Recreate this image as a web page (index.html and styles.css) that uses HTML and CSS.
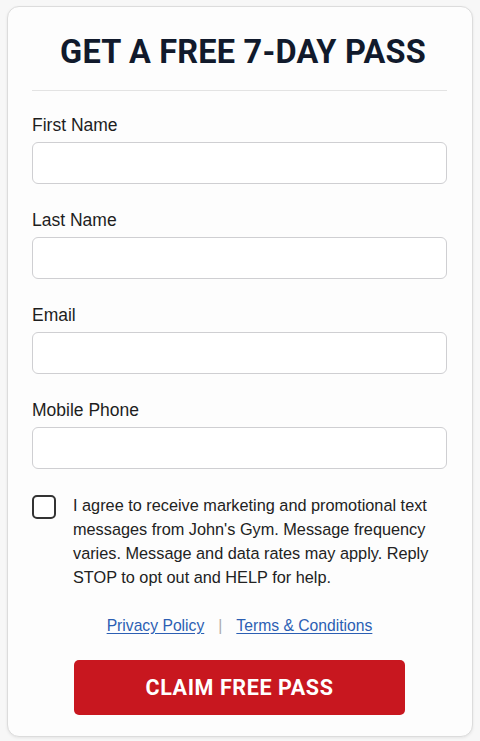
FILE: index.html
```html
<!DOCTYPE html>
<html lang="en">
<head>
<meta charset="utf-8">
<title>Get a Free 7-Day Pass</title>
<link rel="stylesheet" href="styles.css">
</head>
<body>
<main class="card">
  <h1 class="title">GET A FREE 7-DAY PASS</h1>
  <hr class="divider">
  <form class="form">
    <div class="field">
      <label class="label" for="first">First Name</label>
      <input class="input" id="first" type="text">
    </div>
    <div class="field">
      <label class="label" for="last">Last Name</label>
      <input class="input" id="last" type="text">
    </div>
    <div class="field">
      <label class="label" for="email">Email</label>
      <input class="input" id="email" type="email">
    </div>
    <div class="field">
      <label class="label" for="phone">Mobile Phone</label>
      <input class="input" id="phone" type="tel">
    </div>
    <label class="consent">
      <span class="checkbox"></span>
      <span class="consent-text">I agree to receive marketing and promotional text messages from John's Gym. Message frequency varies. Message and data rates may apply. Reply STOP to opt out and HELP for help.</span>
    </label>
    <nav class="links">
      <a href="#" class="link">Privacy Policy</a>
      <span class="sep">|</span>
      <a href="#" class="link">Terms &amp; Conditions</a>
    </nav>
    <button type="button" class="submit">CLAIM FREE PASS</button>
  </form>
</main>
</body>
</html>
```
FILE: styles.css
```css
* { box-sizing: border-box; }
html, body { margin: 0; padding: 0; }
body {
  background: #f7f7f7;
  padding: 6px 7px 4px;
  font-family: "Liberation Sans", Arial, sans-serif;
  color: #222;
}
.card {
  background: #fdfdfd;
  border: 1px solid #dcdcdc;
  border-radius: 12px;
  box-shadow: 0 1px 3px rgba(0,0,0,0.08);
  padding: 25px 25px 22px 24px;
  height: 731px;
}
.title {
  margin: 0;
  padding-left: 7px;
  text-align: center;
  font-family: Roboto, "Liberation Sans", sans-serif;
  font-weight: 700;
  font-size: 32.5px;
  line-height: 40px;
  color: #111a2c;
  letter-spacing: 0.2px;
}
.divider {
  border: 0;
  border-top: 1px solid #e3e3e3;
  margin: 18px 0 23px;
}
.form { display: flex; flex-direction: column; }
.field { display: flex; flex-direction: column; gap: 6px; margin-bottom: 25px; }
.label {
  font-size: 17.5px;
  line-height: 22px;
  color: #1e1e1e;
}
.input {
  height: 42px;
  border: 1px solid #cfcfd2;
  border-radius: 6px;
  background: #fff;
  font: inherit;
}
.consent {
  display: flex;
  gap: 17px;
  margin-top: -1px;
}
.checkbox {
  flex: none;
  width: 24px;
  height: 24px;
  margin-top: 2px;
  border: 2px solid #333;
  border-radius: 5px;
  background: #fff;
}
.consent-text {
  font-size: 16.3px;
  line-height: 24px;
  color: #222;
}
.links {
  display: flex;
  justify-content: center;
  align-items: center;
  gap: 14px;
  margin-top: 26px;
  font-size: 15.7px;
  line-height: 22px;
}
.link { color: #2c5fb3; text-decoration: underline; text-underline-offset: 2px; }
.sep { color: #aaa; }
.submit {
  align-self: center;
  margin-top: 23px;
  width: 331px;
  height: 55px;
  border: 0;
  border-radius: 5px;
  background: #c8171f;
  color: #fff;
  font-family: Roboto, "Liberation Sans", sans-serif;
  font-weight: 700;
  font-size: 21.5px;
  letter-spacing: 0.6px;
}
```
